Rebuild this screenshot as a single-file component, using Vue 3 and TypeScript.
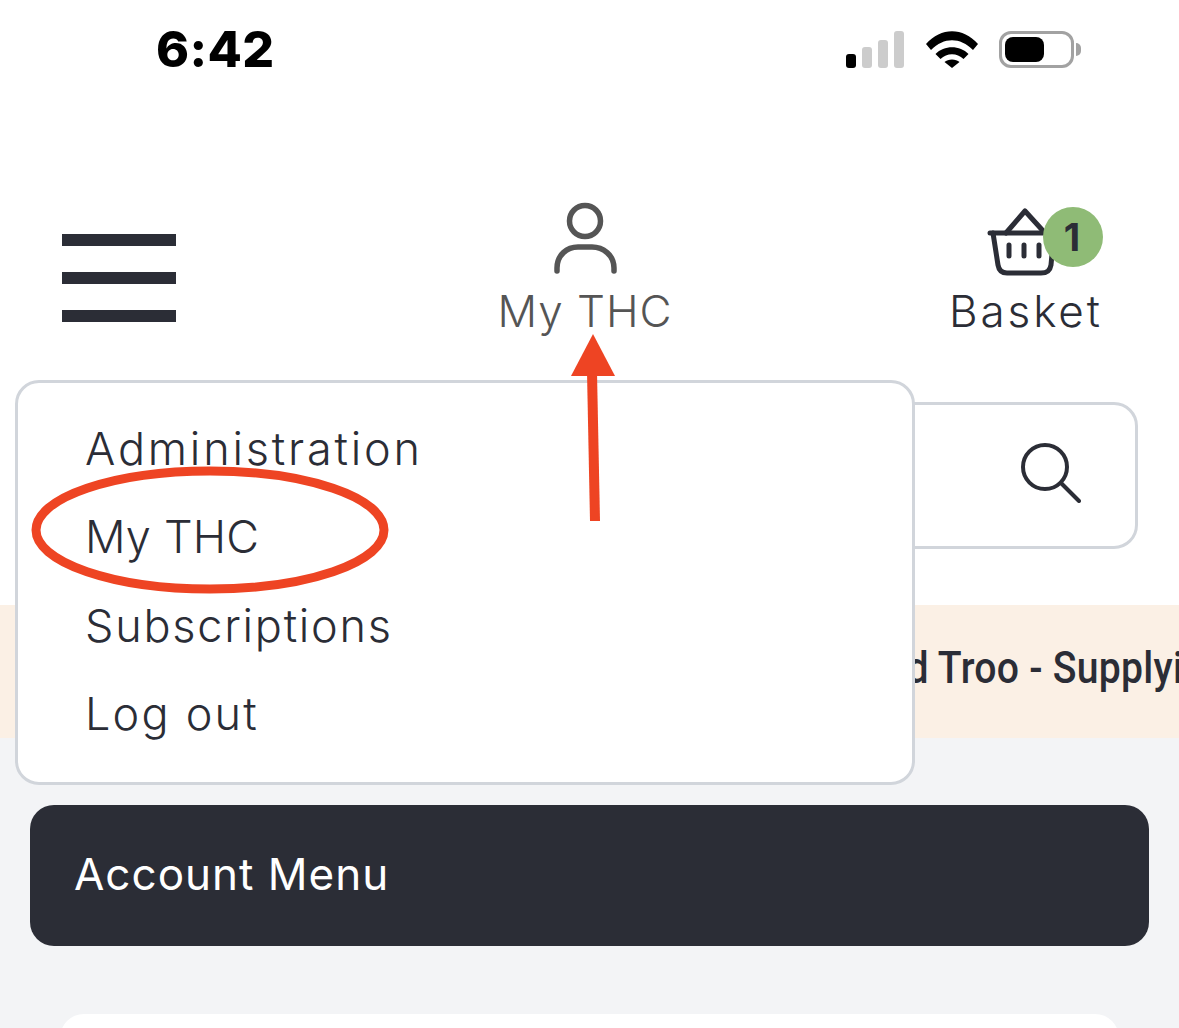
<script setup lang="ts">
interface MenuItem {
  label: string
  tracking: number
}
const menuItems: MenuItem[] = [
  { label: 'Administration', tracking: 2.8 },
  { label: 'My THC', tracking: 0.2 },
  { label: 'Subscriptions', tracking: 1.75 },
  { label: 'Log out', tracking: 2.2 },
]
</script>

<template>
  <div class="page">
    <div class="status">
      <span class="time">6:42</span>
      <div class="status-icons">
        <div class="signal">
          <i class="bar b1"></i><i class="bar b2"></i><i class="bar b3"></i><i class="bar b4"></i>
        </div>
        <svg class="wifi" width="52" height="37" viewBox="0 0 52 37">
          <path d="M0 13 C15 -4 37 -4 52 13 L47 19 C34 6 18 6 5 19 Z" fill="#000" />
          <path d="M9.5 23 C18 14 34 14 42.5 23 L37.5 28 C31 21.5 21 21.5 14.5 28 Z" fill="#000" />
          <path d="M18.5 31 C22 27.5 30 27.5 33.5 31 L26 37 Z" fill="#000" />
        </svg>
        <div class="battery"><div class="charge"></div></div>
        <div class="nub"></div>
      </div>
    </div>

    <header class="nav">
      <div class="burger"><i></i><i></i><i></i></div>
      <div class="nav-user">
        <svg width="66" height="74" viewBox="0 0 66 74" fill="none" stroke="#555" stroke-width="5.5" stroke-linecap="round">
          <circle cx="33" cy="19" r="15.5" />
          <path d="M5 69 V66 C5 53 15 45 26 45 H40 C51 45 62 53 62 66 V69" />
        </svg>
        <span class="nav-label user-label">My THC</span>
      </div>
      <div class="nav-basket">
        <div class="basket-icon">
          <svg width="70" height="70" viewBox="0 0 70 70" fill="none" stroke="#2b2d36" stroke-width="5" stroke-linecap="round" stroke-linejoin="round">
            <path d="M20 26 L39 4 L59 26" />
            <path d="M4 26 H67" />
            <path d="M7 26 L12 58 C13 64 16 66 21 66 H55 C61 66 64 64 65 58 L68 26" />
            <path d="M23 38 V49 M38 38 V49 M53 38 V49" />
          </svg>
          <span class="badge">1</span>
        </div>
        <span class="nav-label basket-label">Basket</span>
      </div>
    </header>

    <div class="search">
      <svg width="60" height="60" viewBox="0 0 60 60" fill="none" stroke="#2b2d36" stroke-width="4" stroke-linecap="round">
        <circle cx="24" cy="24" r="22" />
        <path d="M40 40 L58 58" />
      </svg>
    </div>

    <div class="banner"><span>and Troo - Supplying</span></div>

    <main class="content">
      <div class="account-bar">Account Menu</div>
      <div class="card"></div>
    </main>

    <div class="dropdown">
      <a
        v-for="item in menuItems"
        :key="item.label"
        class="menu-item"
        :style="{ letterSpacing: item.tracking + 'px' }"
      >{{ item.label }}</a>
    </div>

    <svg class="annotations" width="1179" height="1028" viewBox="0 0 1179 1028" fill="none">
      <ellipse cx="210" cy="530" rx="174" ry="59" stroke="#ee4423" stroke-width="9" />
      <path d="M592 372 L595 521" stroke="#ee4423" stroke-width="10" />
      <polygon points="593,334 571,376 615,376" fill="#ee4423" />
    </svg>
  </div>
</template>

<style scoped>
.page {
  position: relative;
  width: 1179px;
  height: 1028px;
  overflow: hidden;
  background: #fff;
  font-family: Inter, "Open Sans", sans-serif;
  color: #2b2d36;
}
.status {
  height: 100px;
  display: flex;
  justify-content: space-between;
  padding: 0 98px 0 156px;
  box-sizing: border-box;
}
.time {
  font-weight: 800;
  font-size: 50px;
  line-height: 50px;
  margin-top: 24px;
  color: #000;
  letter-spacing: 0.4px;
}
.status-icons {
  display: flex;
  align-items: flex-start;
  margin-top: 31px;
}
.signal {
  display: flex;
  align-items: flex-end;
  gap: 6px;
  height: 37px;
  margin-right: 22px;
}
.bar {
  display: block;
  width: 10px;
  border-radius: 3px;
  background: #ccc;
}
.b1 { height: 14px; background: #000; }
.b2 { height: 21px; }
.b3 { height: 28px; }
.b4 { height: 37px; }
.battery {
  width: 75px;
  height: 37px;
  margin-left: 21px;
  box-sizing: border-box;
  border: 3px solid #a2a2a2;
  border-radius: 12px;
  padding: 3px;
}
.charge {
  width: 39px;
  height: 25px;
  background: #000;
  border-radius: 8px;
}
.nub {
  width: 5px;
  height: 13px;
  margin: 12px 0 0 2px;
  background: #a2a2a2;
  border-radius: 0 5px 5px 0;
}
.nav {
  height: 280px;
  display: flex;
  align-items: flex-start;
  box-sizing: border-box;
  padding: 100px 0 0 62px;
}
.burger {
  width: 114px;
  margin-top: 34px;
  display: flex;
  flex-direction: column;
  gap: 26px;
}
.burger i {
  display: block;
  height: 12px;
  background: #2b2d36;
}
.nav-user {
  display: flex;
  flex-direction: column;
  align-items: center;
  width: 180px;
  margin-left: 319px;
  margin-top: 2px;
}
.nav-label {
  font-size: 44px;
  font-weight: 300;
  line-height: 52px;
  white-space: nowrap;
}
.user-label { color: #555; letter-spacing: 1px; margin-top: 9px; }
.nav-basket {
  margin-left: 274px;
  margin-top: 3px;
  width: 160px;
  display: flex;
  flex-direction: column;
  align-items: flex-start;
}
.basket-label { letter-spacing: 2.9px; margin-top: 10px; }
.basket-icon {
  position: relative;
  width: 160px;
  height: 72px;
  padding: 4px 0 0 37px;
  box-sizing: border-box;
}
.badge {
  position: absolute;
  left: 94px;
  top: 4px;
  width: 60px;
  height: 60px;
  padding-right: 2px;
  box-sizing: border-box;
  border-radius: 50%;
  background: #8fbb76;
  display: flex;
  align-items: center;
  justify-content: center;
  font-size: 38px;
  font-weight: 700;
}
.search {
  margin: 22px 41px 56px 30px;
  height: 147px;
  box-sizing: border-box;
  border: 3px solid #d1d5db;
  border-radius: 24px;
  display: flex;
  align-items: center;
  justify-content: flex-end;
  padding: 0 54px 6px 0;
}
.banner {
  height: 133px;
  background: #fbf0e5;
  display: flex;
  align-items: center;
  overflow: hidden;
  white-space: nowrap;
  padding: 0 0 7px 863px;
  box-sizing: border-box;
}
.banner span {
  font-family: Roboto, sans-serif;
  font-weight: 500;
  font-size: 44px;
  letter-spacing: 0.3px;
  display: inline-block;
  transform: scaleX(0.89);
  transform-origin: left center;
}
.content {
  background: #f3f4f6;
  height: 290px;
  padding: 67px 30px 0;
  box-sizing: border-box;
}
.account-bar {
  height: 141px;
  background: #2b2d36;
  color: #fff;
  border-radius: 24px;
  display: flex;
  align-items: center;
  padding: 0 0 4px 44px;
  box-sizing: border-box;
  font-size: 44px;
  font-weight: 400;
  letter-spacing: 1px;
}
.card {
  margin: 68px 30px 0;
  height: 120px;
  background: #fff;
  border-radius: 24px;
}
.dropdown {
  position: absolute;
  left: 15px;
  top: 380px;
  width: 900px;
  height: 405px;
  box-sizing: border-box;
  border: 3px solid #d1d5db;
  border-radius: 24px;
  background: #fff;
  padding: 22px 0 0 67px;
  display: flex;
  flex-direction: column;
}
.menu-item {
  height: 88.3px;
  line-height: 88px;
  font-size: 45px;
  font-weight: 300;
}
.annotations {
  position: absolute;
  left: 0;
  top: 0;
  pointer-events: none;
}
</style>
